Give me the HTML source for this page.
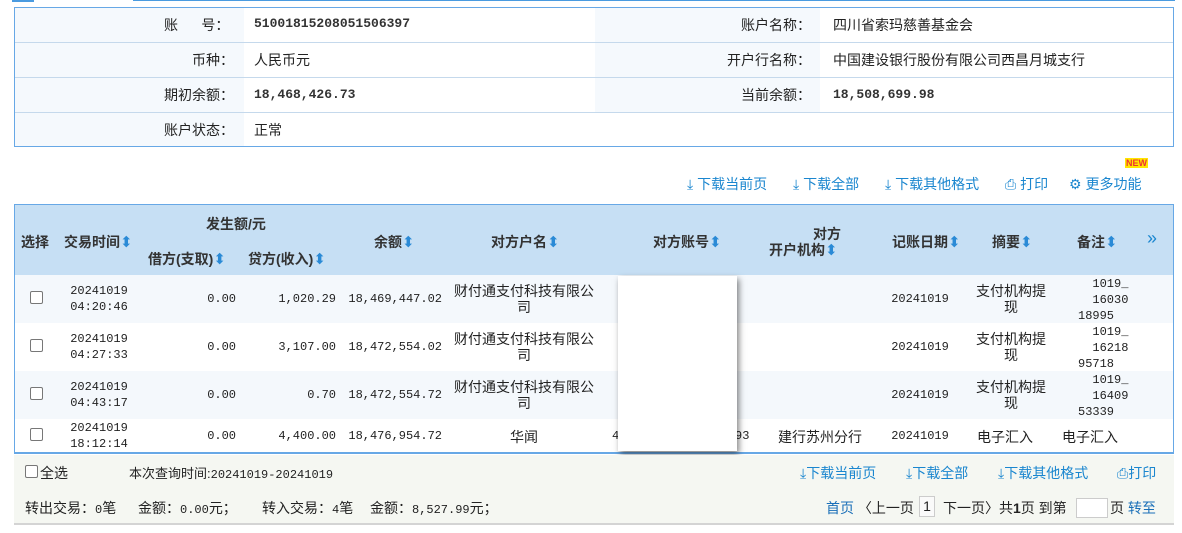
<!DOCTYPE html>
<html><head><meta charset="utf-8"><style>
*{margin:0;padding:0;box-sizing:border-box}
body{width:1182px;height:533px;background:#fff;position:relative;overflow:hidden;font-family:"Liberation Sans","Noto Sans CJK SC",sans-serif;font-size:14px;color:#222}
.a{position:absolute;white-space:nowrap}
.m{font-family:"Liberation Mono","Noto Sans CJK SC",monospace;font-size:12px;line-height:16px}
.bm{font-family:"Liberation Mono",monospace;font-size:13px;font-weight:bold;color:#333;line-height:18px}
.b{color:#1a86cf}
.h{font-weight:bold;color:#333}
.s{color:#2a8ad6;font-size:15px;font-weight:normal}
.cb{position:absolute;width:13px;height:13px;border:1px solid #777;border-radius:2px;background:#fff}
.c{text-align:center}
.r{text-align:right}
</style></head><body>
<div class="a" style="left:12px;top:0;width:22px;height:2px;background:#4a9be0"></div>
<div class="a" style="left:133px;top:0;width:1042px;height:1px;background:#4a9be0"></div>
<div class="a" style="left:14px;top:7px;width:1160px;height:140px;border:1px solid #67a8e6;background:#fff">
 <div class="a" style="left:0;top:0;width:229px;height:138px;background:#f5f9fd"></div>
 <div class="a" style="left:580px;top:0;width:225px;height:104px;background:#f5f9fd"></div>
 <div class="a" style="left:0;top:34px;width:1158px;height:1px;background:#c5d9ec"></div>
 <div class="a" style="left:0;top:69px;width:1158px;height:1px;background:#c5d9ec"></div>
 <div class="a" style="left:0;top:104px;width:1158px;height:1px;background:#c5d9ec"></div>
</div>
<div class="a" style="left:164px;top:15px">账&nbsp;&nbsp;&nbsp;&nbsp;&nbsp;&nbsp;号：</div>
<div class="a" style="left:192px;top:50px">币种：</div>
<div class="a" style="left:164px;top:85px">期初余额：</div>
<div class="a" style="left:164px;top:120px">账户状态：</div>
<div class="a bm" style="left:254px;top:15px">51001815208051506397</div>
<div class="a" style="left:254px;top:50px">人民币元</div>
<div class="a bm" style="left:254px;top:86px">18,468,426.73</div>
<div class="a" style="left:254px;top:120px">正常</div>
<div class="a" style="left:741px;top:15px">账户名称：</div>
<div class="a" style="left:727px;top:50px">开户行名称：</div>
<div class="a" style="left:741px;top:85px">当前余额：</div>
<div class="a" style="left:833px;top:15px">四川省索玛慈善基金会</div>
<div class="a" style="left:833px;top:50px">中国建设银行股份有限公司西昌月城支行</div>
<div class="a bm" style="left:833px;top:86px">18,508,699.98</div>
<div class="a" style="left:1125px;top:158px;font-size:9px;font-weight:bold;color:#e33;background:#ffe600;line-height:10px;padding:0 1px">NEW</div>
<div class="a b" style="left:687px;top:174px">⤓ 下载当前页</div>
<div class="a b" style="left:793px;top:174px">⤓ 下载全部</div>
<div class="a b" style="left:885px;top:174px">⤓ 下载其他格式</div>
<div class="a b" style="left:1005px;top:174px">⎙ 打印</div>
<div class="a b" style="left:1069px;top:174px">⚙ 更多功能</div>
<div class="a" style="left:14px;top:204px;width:1160px;height:250px;border:1px solid #67a8e6;border-bottom:2px solid #67a8e6;background:#fff">
 <div class="a" style="left:0;top:0;width:1158px;height:70px;background:#c6dff4"></div>
 <div class="a" style="left:0;top:70px;width:1158px;height:48px;background:#f4f8fc"></div>
 <div class="a" style="left:0;top:166px;width:1158px;height:48px;background:#f4f8fc"></div>
</div>
<div class="a h" style="left:21px;top:232px">选择</div>
<div class="a h" style="left:64px;top:232px">交易时间<span class="s">⬍</span></div>
<div class="a h" style="left:206px;top:214px">发生额/元</div>
<div class="a h" style="left:148px;top:249px">借方(支取)<span class="s">⬍</span></div>
<div class="a h" style="left:248px;top:249px">贷方(收入)<span class="s">⬍</span></div>
<div class="a h" style="left:374px;top:232px">余额<span class="s">⬍</span></div>
<div class="a h" style="left:491px;top:232px">对方户名<span class="s">⬍</span></div>
<div class="a h" style="left:653px;top:232px">对方账号<span class="s">⬍</span></div>
<div class="a h" style="left:813px;top:224px">对方</div>
<div class="a h" style="left:769px;top:240px">开户机构<span class="s">⬍</span></div>
<div class="a h" style="left:892px;top:232px">记账日期<span class="s">⬍</span></div>
<div class="a h" style="left:992px;top:232px">摘要<span class="s">⬍</span></div>
<div class="a h" style="left:1077px;top:232px">备注<span class="s">⬍</span></div>
<div class="a b" style="left:1147px;top:228px;font-size:18px;letter-spacing:-2px">››</div>
<div class="cb" style="left:30px;top:291px"></div>
<div class="cb" style="left:30px;top:339px"></div>
<div class="cb" style="left:30px;top:387px"></div>
<div class="cb" style="left:30px;top:428px"></div>
<div class="a m c" style="left:60px;top:283px;width:78px">20241019<br>04:20:46</div>
<div class="a m c" style="left:60px;top:331px;width:78px">20241019<br>04:27:33</div>
<div class="a m c" style="left:60px;top:379px;width:78px">20241019<br>04:43:17</div>
<div class="a m c" style="left:60px;top:420px;width:78px">20241019<br>18:12:14</div>
<div class="a m r" style="left:150px;top:291px;width:86px">0.00</div>
<div class="a m r" style="left:150px;top:339px;width:86px">0.00</div>
<div class="a m r" style="left:150px;top:387px;width:86px">0.00</div>
<div class="a m r" style="left:150px;top:428px;width:86px">0.00</div>
<div class="a m r" style="left:236px;top:291px;width:100px">1,020.29</div>
<div class="a m r" style="left:236px;top:339px;width:100px">3,107.00</div>
<div class="a m r" style="left:236px;top:387px;width:100px">0.70</div>
<div class="a m r" style="left:236px;top:428px;width:100px">4,400.00</div>
<div class="a m r" style="left:336px;top:291px;width:106px">18,469,447.02</div>
<div class="a m r" style="left:336px;top:339px;width:106px">18,472,554.02</div>
<div class="a m r" style="left:336px;top:387px;width:106px">18,472,554.72</div>
<div class="a m r" style="left:336px;top:428px;width:106px">18,476,954.72</div>
<div class="a c" style="left:450px;top:283px;width:148px;line-height:16px;white-space:normal">财付通支付科技有限公司</div>
<div class="a c" style="left:450px;top:331px;width:148px;line-height:16px;white-space:normal">财付通支付科技有限公司</div>
<div class="a c" style="left:450px;top:379px;width:148px;line-height:16px;white-space:normal">财付通支付科技有限公司</div>
<div class="a c" style="left:450px;top:427px;width:148px">华闻</div>
<div class="a m" style="left:612px;top:428px">4</div>
<div class="a m" style="left:735px;top:428px">93</div>
<div class="a" style="left:778px;top:427px">建行苏州分行</div>
<div class="a m c" style="left:880px;top:339px;width:80px;top:291px">20241019</div>
<div class="a m c" style="left:880px;top:339px;width:80px">20241019</div>
<div class="a m c" style="left:880px;top:387px;width:80px">20241019</div>
<div class="a m c" style="left:880px;top:428px;width:80px">20241019</div>
<div class="a c" style="left:972px;top:283px;width:78px;line-height:16px">支付机构提<br>现</div>
<div class="a c" style="left:972px;top:331px;width:78px;line-height:16px">支付机构提<br>现</div>
<div class="a c" style="left:972px;top:379px;width:78px;line-height:16px">支付机构提<br>现</div>
<div class="a" style="left:977px;top:427px">电子汇入</div>
<div class="a m" style="left:1078px;top:276px">&nbsp;&nbsp;1019_<br>&nbsp;&nbsp;16030<br>18995</div>
<div class="a m" style="left:1078px;top:324px">&nbsp;&nbsp;1019_<br>&nbsp;&nbsp;16218<br>95718</div>
<div class="a m" style="left:1078px;top:372px">&nbsp;&nbsp;1019_<br>&nbsp;&nbsp;16409<br>53339</div>
<div class="a" style="left:1062px;top:427px">电子汇入</div>
<div class="a" style="left:618px;top:276px;width:119px;height:175px;background:#fff;box-shadow:2px 3px 6px rgba(0,0,0,0.5)"></div>
<div class="a" style="left:14px;top:455px;width:1160px;height:70px;background:#f5f7f2;border-bottom:2px solid #d4d4d4"></div>
<div class="cb" style="left:25px;top:465px"></div>
<div class="a" style="left:40px;top:463px">全选</div>
<div class="a" style="left:129px;top:463px;font-size:13px">本次查询时间:<span class="m" style="font-size:12px">20241019-20241019</span></div>
<div class="a b" style="left:800px;top:463px">⤓下载当前页</div>
<div class="a b" style="left:906px;top:463px">⤓下载全部</div>
<div class="a b" style="left:998px;top:463px">⤓下载其他格式</div>
<div class="a b" style="left:1117px;top:463px">⎙打印</div>
<div class="a" style="left:25px;top:498px">转出交易：<span class="m">0</span>笔</div>
<div class="a" style="left:138px;top:498px">金额：<span class="m">0.00</span>元；</div>
<div class="a" style="left:262px;top:498px">转入交易：<span class="m">4</span>笔</div>
<div class="a" style="left:370px;top:498px">金额：<span class="m">8,527.99</span>元；</div>
<div class="a" style="left:826px;top:498px"><span style="color:#1a6fb8">首页</span> 〈上一页</div>
<div class="a" style="left:919px;top:496px;width:16px;height:21px;border:1px solid #ccc;background:#fafafa;text-align:center;line-height:19px">1</div>
<div class="a" style="left:943px;top:498px">下一页〉共<b>1</b>页 到第</div>
<div class="a" style="left:1076px;top:498px;width:32px;height:20px;border:1px solid #ccc;background:#fff"></div>
<div class="a" style="left:1110px;top:498px">页 <span style="color:#1a6fb8">转至</span></div>
</body></html>
